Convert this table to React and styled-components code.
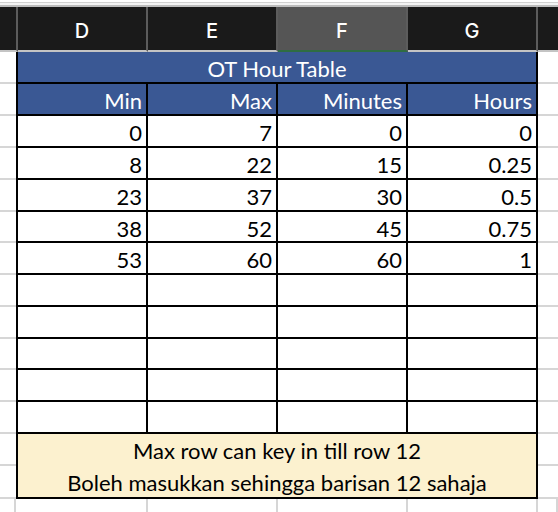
import styled, { createGlobalStyle } from "styled-components";

const GlobalStyle = createGlobalStyle`
	html, body {
		margin: 0;
		padding: 0;
		background: #ffffff;
	}
	body {
		width: 558px;
		height: 512px;
		overflow: hidden;
	}
`;

const Sheet = styled.div`
	width: 558px;
	height: 512px;
	overflow: hidden;
	font-family: "Lato", "Liberation Sans", sans-serif;
	background: #ffffff;
`;

const TopStrip = styled.div`
	height: 7px;
	box-sizing: border-box;
	background: #f4f4f4;
	border-top: 2px solid #ffffff;
	border-bottom: 2px solid #bdbdbd;
	box-shadow: inset 0 1px 0 #d2d2d2;
`;

const ColHeaders = styled.div`
	display: grid;
	grid-template-columns: 18px 130px 130px 130px 130px 1fr;
	height: 45px;
	background: #1a1a1a;
`;

const ColHead = styled.div`
	box-sizing: border-box;
	display: flex;
	align-items: center;
	justify-content: center;
	color: #ffffff;
	font-family: "Inter", "Lato", sans-serif;
	font-size: 20px;
	font-weight: 500;
	background: ${(props) => (props.$selected ? "#555555" : "#1a1a1a")};
	border-right: 2px solid #5c5c5c;
	border-bottom: 2px solid
		${(props) => (props.$selected ? "#2f6d42" : "#c4c4c4")};
	padding-top: 4px;
`;

const Grid = styled.div`
	display: grid;
	grid-template-columns: 16px 132px 130px 130px 130px 1fr;
	grid-template-rows: 32px 32px 32px 32px 32px 31px 32px 32px 32px 31px 32px 32px 32px 33px 20px;
`;

const Gutter = styled.div`
	box-sizing: border-box;
	border-bottom: 2px solid #d6d6d6;
`;

const Cell = styled.div`
	box-sizing: border-box;
	display: flex;
	align-items: center;
	justify-content: flex-end;
	padding: 3px 4px 0 4px;
	font-size: 22px;
	color: ${(props) => (props.$head ? "#ffffff" : "#000000")};
	background: ${(props) => (props.$head ? "#3a5894" : "#ffffff")};
	border-right: 2px solid #000000;
	border-bottom: 2px solid #000000;
	border-left: ${(props) => (props.$first ? "2px solid #000000" : "none")};
`;

const TitleCell = styled(Cell)`
	grid-column: span 4;
	border-left: 2px solid #000000;
	justify-content: center;
`;

const Note = styled.div`
	box-sizing: border-box;
	grid-column: span 4;
	grid-row: span 2;
	display: flex;
	flex-direction: column;
	background: #fcf1cf;
	border-left: 2px solid #000000;
	border-right: 2px solid #000000;
	border-bottom: 2px solid #000000;
	font-size: 22px;
	color: #000000;
`;

const NoteLine = styled.div`
	flex: 1;
	display: flex;
	align-items: center;
	justify-content: center;
	padding-top: 2px;
`;

const Blank = styled.div`
	box-sizing: border-box;
	border-right: 2px solid #d6d6d6;
	&:first-child {
		border-right: none;
	}
`;

const columns = ["D", "E", "F", "G"];
const headers = ["Min", "Max", "Minutes", "Hours"];
const rows = [
	["0", "7", "0", "0"],
	["8", "22", "15", "0.25"],
	["23", "37", "30", "0.5"],
	["38", "52", "45", "0.75"],
	["53", "60", "60", "1"],
	["", "", "", ""],
	["", "", "", ""],
	["", "", "", ""],
	["", "", "", ""],
	["", "", "", ""],
];

const App = () => {
	return (
		<Sheet>
			<GlobalStyle />
			<TopStrip />
			<ColHeaders>
				<ColHead />
				{columns.map((c) => (
					<ColHead key={c} $selected={c === "F"}>
						{c}
					</ColHead>
				))}
				<ColHead style={{ borderRight: "none" }} />
			</ColHeaders>
			<Grid>
				<Gutter />
				<TitleCell $head>OT Hour Table</TitleCell>
				<Gutter />

				<Gutter />
				{headers.map((h, i) => (
					<Cell key={h} $head $first={i === 0}>
						{h}
					</Cell>
				))}
				<Gutter />

				{rows.map((row, r) => [
					<Gutter key={`l${r}`} />,
					...row.map((v, i) => (
						<Cell key={`${r}-${i}`} $first={i === 0}>
							{v}
						</Cell>
					)),
					<Gutter key={`r${r}`} />,
				])}

				<Gutter />
				<Note>
					<NoteLine>Max row can key in till row 12</NoteLine>
					<NoteLine>Boleh masukkan sehingga barisan 12 sahaja</NoteLine>
				</Note>
				<Gutter />
				<Gutter />
				<Gutter />

				<Blank />
				<Blank />
				<Blank />
				<Blank />
				<Blank />
				<Blank />
			</Grid>
		</Sheet>
	);
};

export default App;
